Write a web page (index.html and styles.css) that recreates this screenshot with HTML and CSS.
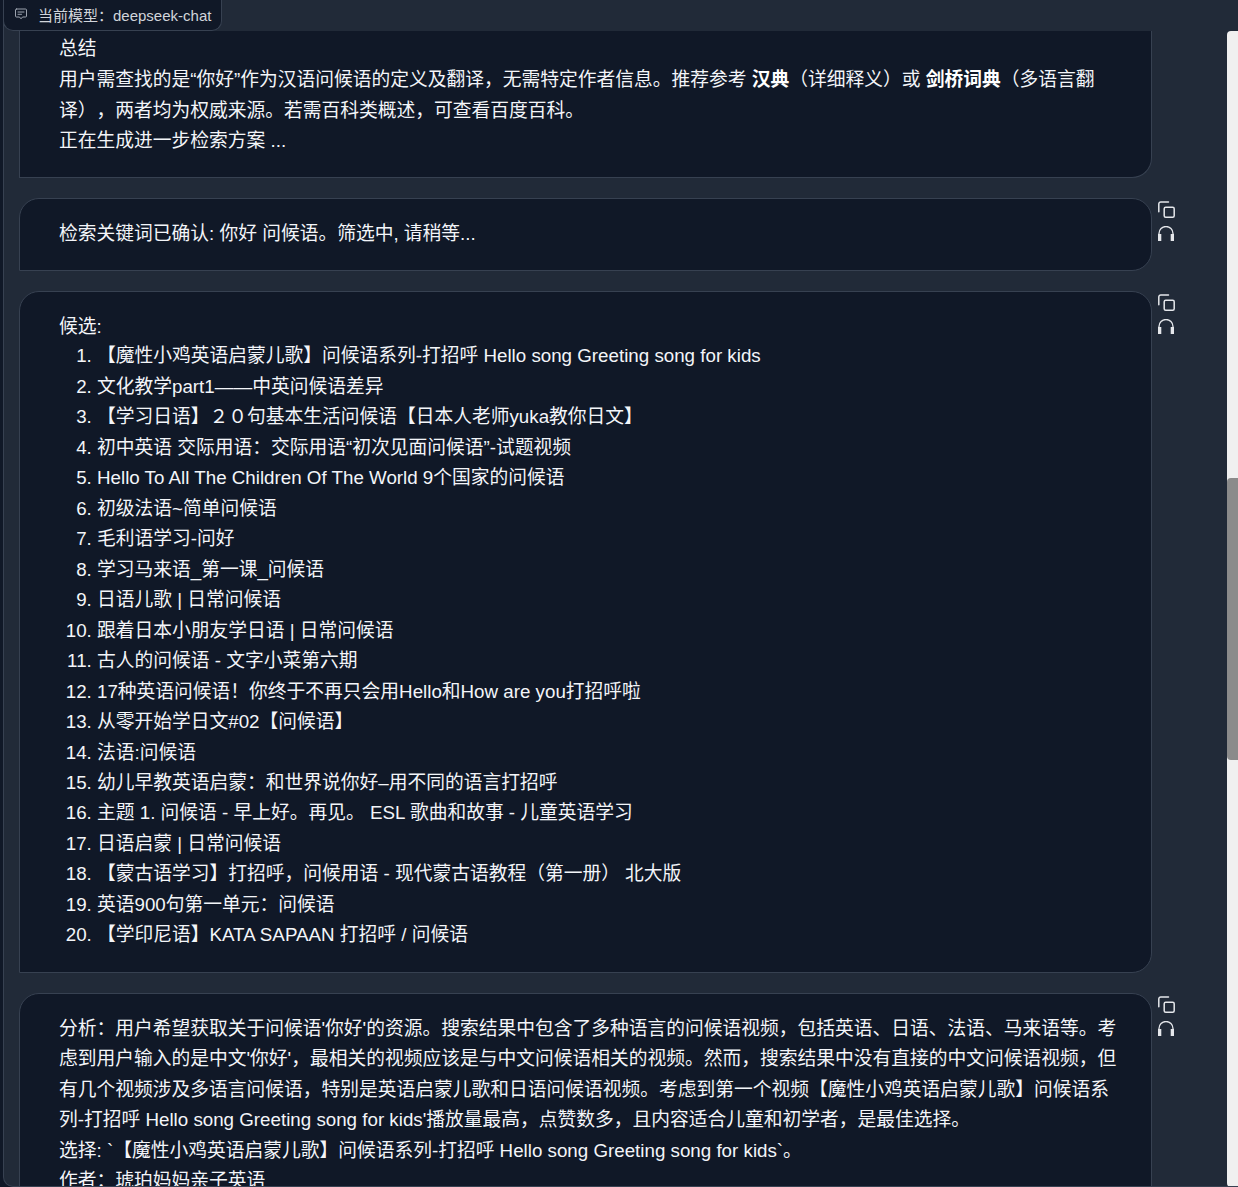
FILE: index.html
```html
<!DOCTYPE html>
<html lang="zh-CN">
<head>
<meta charset="utf-8">
<title>当前模型：deepseek-chat</title>
<link rel="stylesheet" href="styles.css">
</head>
<body>
<div class="app">
  <div class="model-tag">
    <svg class="tag-icon" viewBox="0 0 12 12" fill="none" stroke="currentColor" stroke-width="1" stroke-linejoin="round" stroke-linecap="round"><path d="M1.500 1h9a1 1 0 0 1 1 1v6a1 1 0 0 1-1 1H7.500L6 10.800 4.500 9h-3a1 1 0 0 1-1-1V2a1 1 0 0 1 1-1z"/><path d="M3 4h6M3 6.300h3.500"/></svg>
    <span>当前模型：deepseek-chat</span>
  </div>
  <main class="scroller">
    <div class="feed">
      <section class="row">
        <div class="bubble first">
          <p class="lead">总结</p>
          <p>用户需查找的是“你好”作为汉语问候语的定义及翻译，无需特定作者信息。推荐参考 <strong>汉典</strong>（详细释义）或 <strong>剑桥词典</strong>（多语言翻译），两者均为权威来源。若需百科类概述，可查看百度百科。</p>
          <p>正在生成进一步检索方案 ...</p>
        </div>
      </section>
      <section class="row">
        <div class="bubble">
          <p>检索关键词已确认: 你好 问候语。筛选中, 请稍等...</p>
        </div>
        <div class="actions">
          <svg class="ico-copy" viewBox="0 0 17 17" fill="none" stroke="currentColor" stroke-width="1.5" stroke-linejoin="round" stroke-linecap="round"><rect x="6.200" y="6.200" width="10" height="10" rx="1.500"/><path d="M10.500 1H2.800A2 2 0 0 0 .8 3v7.800"/></svg>
          <svg class="ico-head" viewBox="0 0 16 15" fill="none" stroke="currentColor" stroke-width="1.300"><path d="M1 8V7.500a7 7 0 0 1 14 0V8"/><path class="fill" d="M0 8h3.300v7H0zM12.700 8H16v7h-3.300z"/></svg>
        </div>
      </section>
      <section class="row">
        <div class="bubble">
          <p>候选:</p>
          <ol>
            <li>【魔性小鸡英语启蒙儿歌】问候语系列-打招呼 Hello song Greeting song for kids</li>
            <li>文化教学part1——中英问候语差异</li>
            <li>【学习日语】２０句基本生活问候语【日本人老师yuka教你日文】</li>
            <li>初中英语 交际用语：交际用语“初次见面问候语”-试题视频</li>
            <li>Hello To All The Children Of The World 9个国家的问候语</li>
            <li>初级法语~简单问候语</li>
            <li>毛利语学习-问好</li>
            <li>学习马来语_第一课_问候语</li>
            <li>日语儿歌 | 日常问候语</li>
            <li>跟着日本小朋友学日语 | 日常问候语</li>
            <li>古人的问候语 - 文字小菜第六期</li>
            <li>17种英语问候语！你终于不再只会用Hello和How are you打招呼啦</li>
            <li>从零开始学日文#02【问候语】</li>
            <li>法语:问候语</li>
            <li>幼儿早教英语启蒙：和世界说你好–用不同的语言打招呼</li>
            <li>主题 1. 问候语 - 早上好。再见。 ESL 歌曲和故事 - 儿童英语学习</li>
            <li>日语启蒙 | 日常问候语</li>
            <li>【蒙古语学习】打招呼，问候用语 - 现代蒙古语教程（第一册） 北大版</li>
            <li>英语900句第一单元：问候语</li>
            <li>【学印尼语】KATA SAPAAN 打招呼 / 问候语</li>
          </ol>
        </div>
        <div class="actions">
          <svg class="ico-copy" viewBox="0 0 17 17" fill="none" stroke="currentColor" stroke-width="1.5" stroke-linejoin="round" stroke-linecap="round"><rect x="6.200" y="6.200" width="10" height="10" rx="1.500"/><path d="M10.500 1H2.800A2 2 0 0 0 .8 3v7.800"/></svg>
          <svg class="ico-head" viewBox="0 0 16 15" fill="none" stroke="currentColor" stroke-width="1.300"><path d="M1 8V7.500a7 7 0 0 1 14 0V8"/><path class="fill" d="M0 8h3.300v7H0zM12.700 8H16v7h-3.300z"/></svg>
        </div>
      </section>
      <section class="row">
        <div class="bubble">
          <p>分析：用户希望获取关于问候语'你好'的资源。搜索结果中包含了多种语言的问候语视频，包括英语、日语、法语、马来语等。考虑到用户输入的是中文'你好'，最相关的视频应该是与中文问候语相关的视频。然而，搜索结果中没有直接的中文问候语视频，但有几个视频涉及多语言问候语，特别是英语启蒙儿歌和日语问候语视频。考虑到第一个视频【魔性小鸡英语启蒙儿歌】问候语系列-打招呼 Hello song Greeting song for kids'播放量最高，点赞数多，且内容适合儿童和初学者，是最佳选择。</p>
          <p>选择: `【魔性小鸡英语启蒙儿歌】问候语系列-打招呼 Hello song Greeting song for kids`。</p>
          <p>作者：琥珀妈妈亲子英语</p>
        </div>
        <div class="actions">
          <svg class="ico-copy" viewBox="0 0 17 17" fill="none" stroke="currentColor" stroke-width="1.5" stroke-linejoin="round" stroke-linecap="round"><rect x="6.200" y="6.200" width="10" height="10" rx="1.500"/><path d="M10.500 1H2.800A2 2 0 0 0 .8 3v7.800"/></svg>
          <svg class="ico-head" viewBox="0 0 16 15" fill="none" stroke="currentColor" stroke-width="1.300"><path d="M1 8V7.500a7 7 0 0 1 14 0V8"/><path class="fill" d="M0 8h3.300v7H0zM12.700 8H16v7h-3.300z"/></svg>
        </div>
      </section>
    </div>
    <div class="scrollbar"><div class="thumb"></div></div>
  </main>
</div>
</body>
</html>
```
FILE: styles.css
```css
* { box-sizing: border-box; }
html, body { margin: 0; height: 100%; overflow: hidden; background: #101827; }
body { font-family: "Liberation Sans", "Noto Sans CJK SC", sans-serif; color: #f3f5f9; text-spacing-trim: space-all; }
.app { height: 1187px; margin-left: 3px; display: flex; flex-direction: column; position: relative; overflow: hidden; background: #212a38; border-left: 1px solid #374151; border-bottom: 1px solid #374151; border-bottom-left-radius: 10px; }
.model-tag {
  position: absolute; left: -1px; top: 0; z-index: 2;
  height: 31px; width: 219px;
  display: flex; align-items: center; gap: 11px; padding: 0 0 2px 11px;
  background: #101827; border: 1px solid #374151; border-top: 0;
  border-bottom-right-radius: 10px; border-bottom-left-radius: 10px;
  font-size: 15px; color: #d1d5db;
}
.tag-icon { width: 12px; height: 12px; flex: none; color: #9ca3af; }
.scroller { flex: 1; display: flex; min-height: 0; padding-top: 31px; }
.feed { flex: 1; min-width: 0; padding-left: 15px; display: flex; flex-direction: column; gap: 20px; overflow: hidden; }
.row { display: flex; align-items: flex-start; flex: none; }
.bubble {
  width: 1133px; flex: none;
  background: #101827; border: 1px solid #374151; border-radius: 20px 20px 20px 0;
  padding: 20px 33px 20px 39px;
  font-size: 18.75px; line-height: 30.47px; color: #f3f5f9;
}
.bubble.first { border-top: 0; border-radius: 0 0 20px 0; padding-top: 3px; padding-bottom: 20.6px; }
.bubble p { margin: 0; }
.bubble .lead { margin-bottom: 1px; }
.bubble strong { font-weight: 700; color: #fff; }
.bubble ol { margin: -1px 0 1px; padding: 0 0 0 38px; }
.actions { display: flex; flex-direction: column; gap: 8px; align-items: flex-start; margin: 3px 0 0 6px; color: #e5e7eb; }
.ico-copy { width: 17px; height: 17px; display: block; }
.ico-head { width: 16px; height: 15px; display: block; }
.ico-head .fill { fill: currentColor; stroke: none; }
.scrollbar { position: absolute; right: 0; top: 31px; bottom: -1px; width: 11px; background: #f0f0f0; border-radius: 4px 0 0 4px; }
.thumb { position: absolute; left: 0; right: 0; top: 447px; height: 282px; background: #8b8b8b; border-radius: 4px 0 0 4px; }
```
